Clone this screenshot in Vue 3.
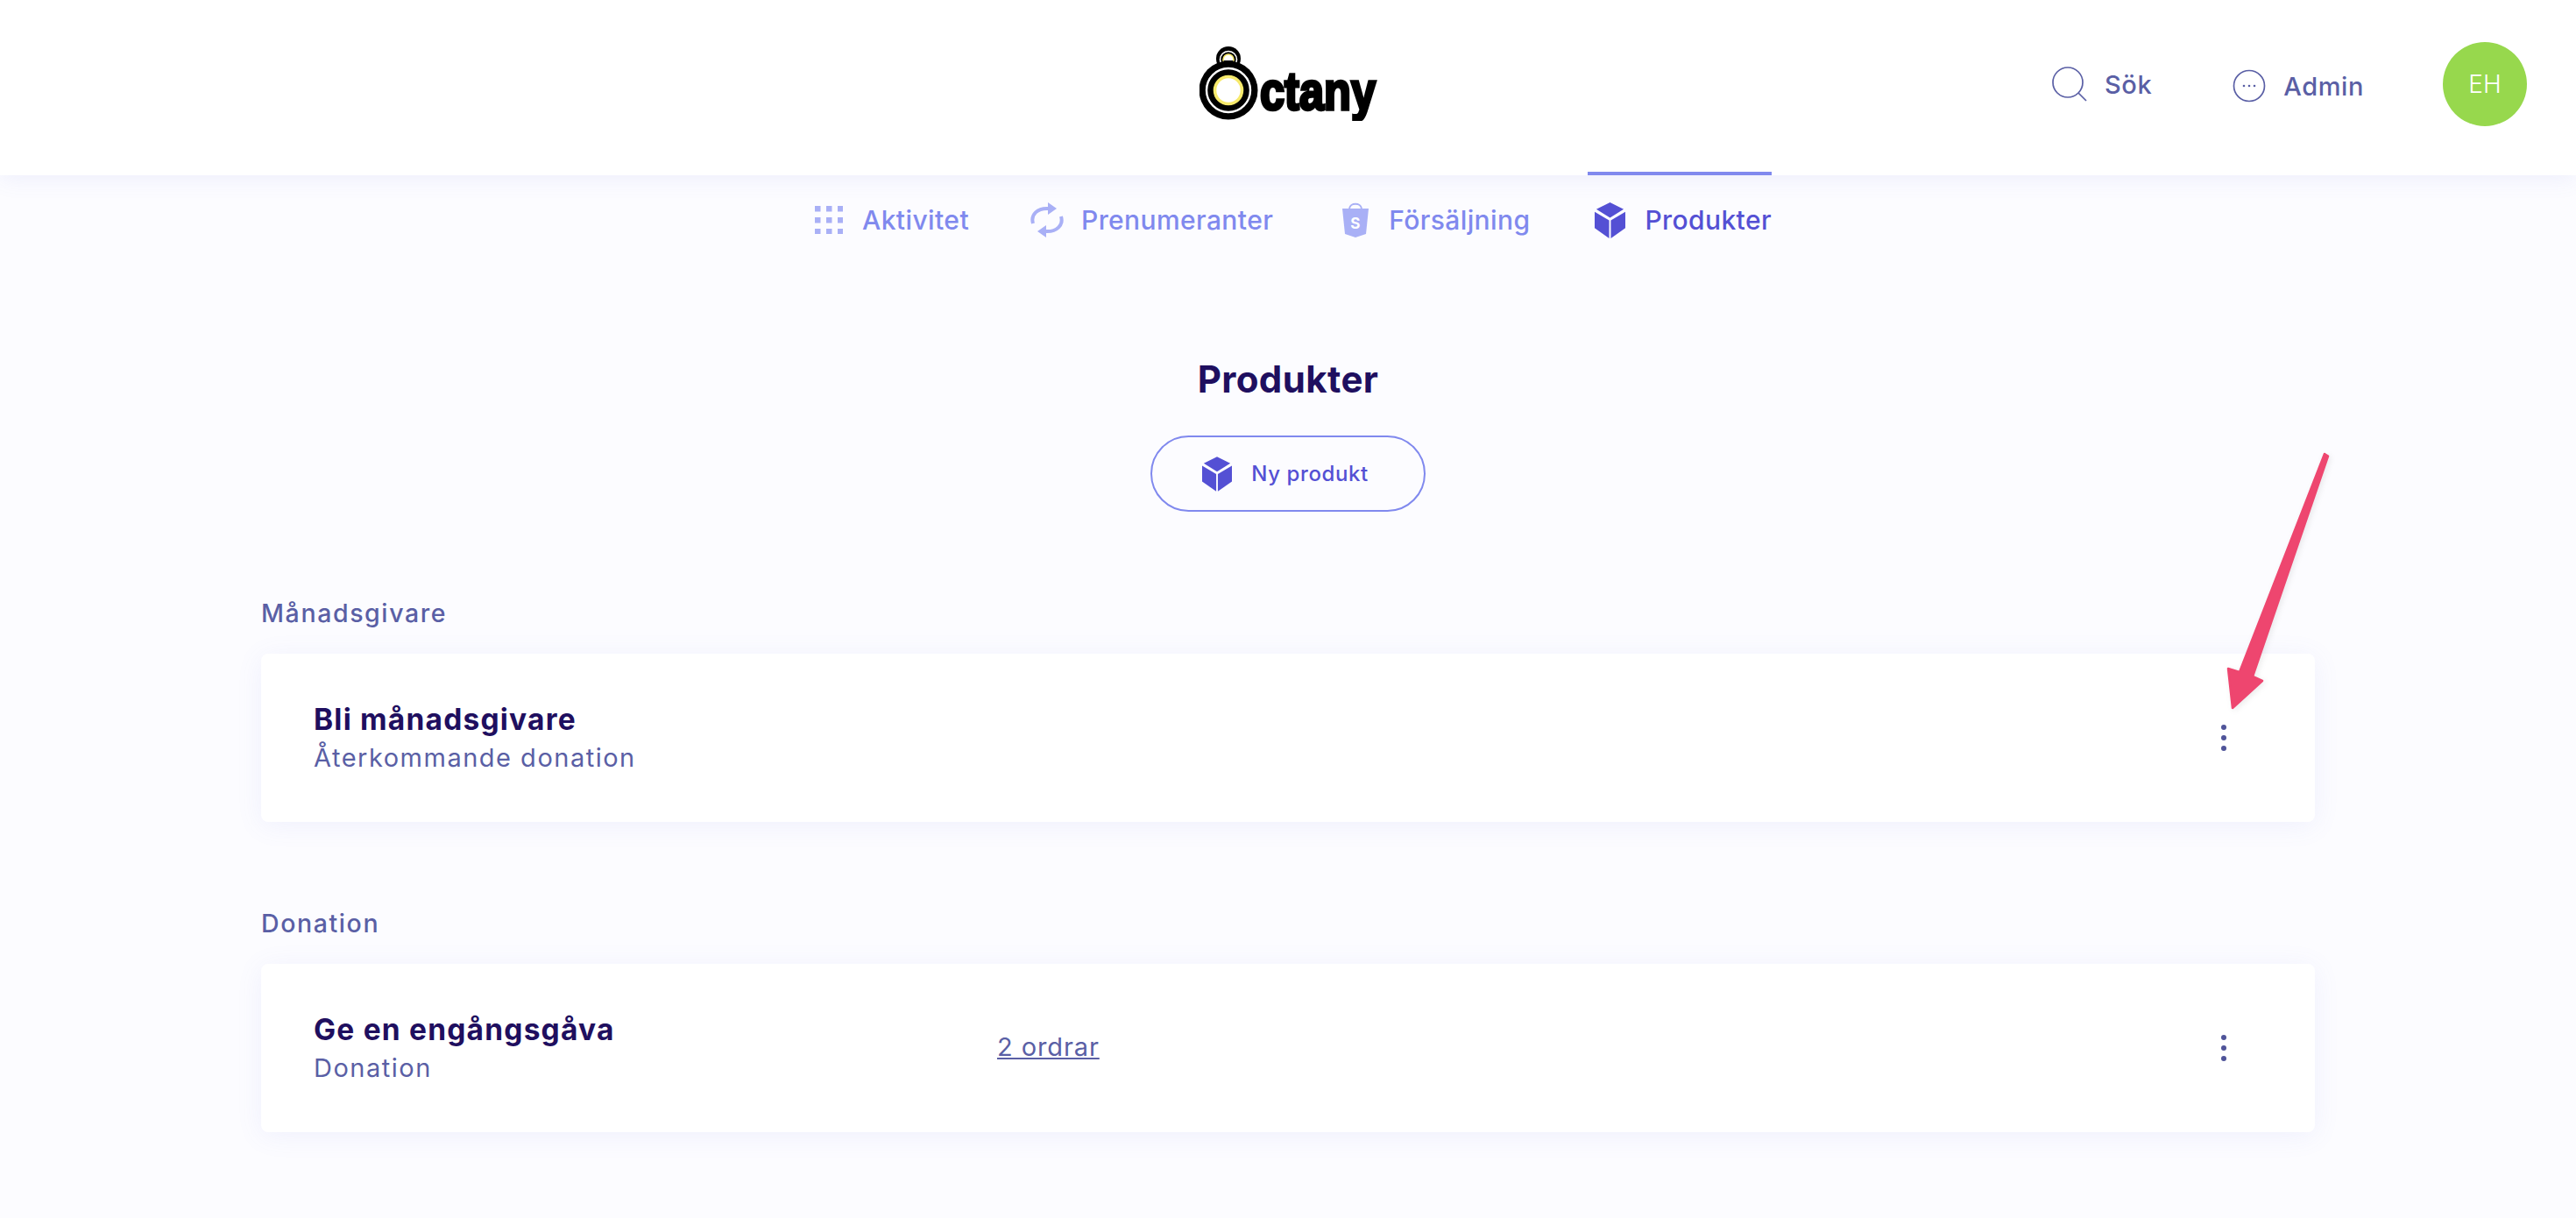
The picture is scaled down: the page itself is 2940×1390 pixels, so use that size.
<template>
  <div class="page">
    <header class="topbar">
      <div class="topbar-side"></div>
      <div class="logo" aria-label="Octany">
        <svg width="222" height="86" viewBox="0 0 222 86">
          <circle cx="33" cy="15" r="14" fill="#000" />
          <circle cx="33" cy="16" r="9.5" fill="none" stroke="#fff" stroke-width="1.6" />
          <circle cx="33" cy="16" r="6" fill="#fff" stroke="#f7ea6c" stroke-width="1.6" />
          <path d="M27.5 17h11a5.5 5 0 0 1-11 0z" fill="#000" />
          <circle cx="33" cy="51" r="33.5" fill="#000" />
          <circle cx="33" cy="51" r="25" fill="none" stroke="#fff" stroke-width="2.4" />
          <circle cx="33" cy="51" r="15.5" fill="#fff" stroke="#f7ea6c" stroke-width="3.6" />
          <text class="logo-text" x="69" y="73" textLength="132" lengthAdjust="spacingAndGlyphs">ctany</text>
        </svg>
      </div>
      <div class="topbar-side topbar-actions">
        <a class="action action-search">
          <svg width="40" height="40" viewBox="0 0 40 40" fill="none" stroke="#5a5fa5" stroke-width="1.7">
            <ellipse cx="18" cy="18" rx="17" ry="17" />
            <path d="M30 30l9 9" />
          </svg>
          <span>Sök</span>
        </a>
        <a class="action action-admin">
          <svg width="38" height="38" viewBox="0 0 38 38" fill="none" stroke="#5a5fa5" stroke-width="1.7">
            <circle cx="19" cy="19" r="17.5" />
            <circle cx="13" cy="19" r="1.3" fill="#5a5fa5" stroke="none" />
            <circle cx="19" cy="19" r="1.3" fill="#5a5fa5" stroke="none" />
            <circle cx="25" cy="19" r="1.3" fill="#5a5fa5" stroke="none" />
          </svg>
          <span>Admin</span>
        </a>
        <div class="avatar">EH</div>
      </div>
    </header>

    <nav class="tabs">
      <a v-for="tab in tabs" :key="tab.label" class="tab" :class="{ active: tab.active }">
        <svg v-if="tab.icon === 'grid'" class="tab-icon" width="32" height="32" viewBox="0 0 32 32" fill="#a9b0f6">
          <template v-for="row in [0, 1, 2]" :key="row">
            <rect v-for="col in [0, 1, 2]" :key="col" :x="col * 13" :y="row * 13" width="6.5" height="6.5" />
          </template>
        </svg>
        <svg v-else-if="tab.icon === 'sync'" class="tab-icon" width="38" height="42" viewBox="0 0 38 42" fill="none">
          <path d="M3 25C0 15 8 7 21 8" stroke="#a9b0f6" stroke-width="4" />
          <path d="M20 1l10 7-10 7z" fill="#a9b0f6" />
          <path d="M35 17C38 27 30 35 17 34" stroke="#a9b0f6" stroke-width="4" />
          <path d="M18 41L8 34l10-7z" fill="#a9b0f6" />
        </svg>
        <svg v-else-if="tab.icon === 'bag'" class="tab-icon" width="32" height="40" viewBox="0 0 32 40">
          <path d="M9 7C10 0 22 0 23 7" fill="none" stroke="#a9b0f6" stroke-width="2" />
          <path d="M1 7l30 0-3 29-12 4-12-4z" fill="#a9b0f6" />
          <text x="16" y="30" class="bag-s">S</text>
        </svg>
        <svg v-else class="tab-icon" width="35" height="41" viewBox="0 0 36 42" fill="#5450d4">
          <path d="M18 0l16 8-16 10L2 8z" />
          <path d="M0 11l17 10v21L0 30z" />
          <path d="M36 11L19 21v21l17-12z" />
        </svg>
        <span>{{ tab.label }}</span>
      </a>
    </nav>

    <main class="content">
      <h1 class="title">Produkter</h1>
      <a class="new-button">
        <svg width="34" height="40" viewBox="0 0 36 42" fill="#5450d4">
          <path d="M18 0l16 8-16 10L2 8z" />
          <path d="M0 11l17 10v21L0 30z" />
          <path d="M36 11L19 21v21l17-12z" />
        </svg>
        <span>Ny produkt</span>
      </a>

      <section v-for="group in groups" :key="group.label" class="group">
        <h2 class="group-label">{{ group.label }}</h2>
        <div class="card">
          <div class="card-main">
            <div class="card-title">{{ group.title }}</div>
            <div class="card-sub">{{ group.sub }}</div>
          </div>
          <a v-if="group.orders" class="orders">{{ group.orders }}</a>
          <div class="dots"><i></i><i></i><i></i></div>
        </div>
      </section>
    </main>

    <svg class="arrow" width="130" height="310" viewBox="0 0 130 310">
      <path
        d="M118 8L122 10.5L36 262L47 267L13 298L8 253L21 257z"
        fill="#ee466f"
        stroke="#ee466f"
        stroke-width="2.5"
        stroke-linejoin="round"
      />
    </svg>
  </div>
</template>

<script setup>
const tabs = [
  { label: 'Aktivitet', icon: 'grid' },
  { label: 'Prenumeranter', icon: 'sync' },
  { label: 'Försäljning', icon: 'bag' },
  { label: 'Produkter', icon: 'box', active: true },
]

const groups = [
  { label: 'Månadsgivare', title: 'Bli månadsgivare', sub: 'Återkommande donation' },
  { label: 'Donation', title: 'Ge en engångsgåva', sub: 'Donation', orders: '2 ordrar' },
]
</script>

<style>
html,
body {
  background: #fcfcff;
}
</style>

<style scoped>
.page {
  position: relative;
  min-height: 1390px;
  background: #fcfcff;
  font-family: Inter, 'Noto Sans', sans-serif;
  color: #5a5fa5;
  overflow: hidden;
}

.topbar {
  display: grid;
  grid-template-columns: 1fr auto 1fr;
  align-items: center;
  box-sizing: border-box;
  height: 200px;
  padding-bottom: 8px;
  background: #fff;
  box-shadow: 0 4px 24px rgba(110, 120, 230, 0.1);
  position: relative;
}

.logo {
  display: flex;
  transform: translate(2px, -1px);
}

.logo svg {
  margin-right: -16px;
}

.logo-text {
  font-family: 'Liberation Sans', sans-serif;
  font-weight: 700;
  font-size: 62px;
  fill: #000;
  stroke: #000;
  stroke-width: 3.5px;
}

.topbar-actions {
  display: flex;
  align-items: center;
  justify-content: flex-end;
  padding-right: 56px;
}

.action {
  display: flex;
  align-items: center;
  gap: 20px;
  font-size: 29px;
  font-weight: 500;
  letter-spacing: 0.6px;
}

.action-admin {
  margin-left: 92px;
  margin-right: 90px;
}

.action-admin svg,
.action-admin span {
  position: relative;
  top: 2px;
}

.avatar {
  width: 96px;
  height: 96px;
  border-radius: 50%;
  background: #97d84d;
  color: #fff;
  font-size: 28px;
  font-weight: 300;
  display: flex;
  align-items: center;
  justify-content: center;
}

.tabs {
  display: flex;
  justify-content: center;
  gap: 72px;
  height: 102px;
  padding-left: 12px;
}

.tab {
  position: relative;
  display: flex;
  align-items: center;
  gap: 22px;
  font-size: 30px;
  font-weight: 500;
  letter-spacing: 0.4px;
  color: #8089ee;
}

.tab:nth-child(2) {
  gap: 20px;
  margin: 0 6px 0 -2px;
}

.tab:nth-child(3) {
  margin-right: 2px;
}

.tab.active {
  color: #5450d4;
}

.tab.active::before {
  content: '';
  position: absolute;
  top: -4px;
  left: -8px;
  right: 0;
  height: 4px;
  background: #8089ee;
}

.bag-s {
  font-family: Inter, sans-serif;
  font-weight: 700;
  font-size: 17px;
  fill: #fff;
  text-anchor: middle;
}

.content {
  display: flex;
  flex-direction: column;
  align-items: center;
  padding: 101px 298px 0;
}

.title {
  margin: 0;
  font-size: 42px;
  line-height: 60px;
  font-weight: 700;
  color: #1f0f5f;
  letter-spacing: 0.4px;
}

.new-button {
  display: flex;
  align-items: center;
  justify-content: center;
  gap: 22px;
  box-sizing: border-box;
  width: 314px;
  height: 87px;
  margin: 34px 0 0;
  padding-right: 6px;
  border: 2px solid #8089ee;
  border-radius: 44px;
  font-size: 24px;
  font-weight: 500;
  letter-spacing: 0.6px;
  color: #5450d4;
}

.group {
  width: 100%;
  margin-top: 96px;
}

.group-label {
  margin: 0 0 26px;
  font-size: 28.5px;
  line-height: 40px;
  font-weight: 500;
  color: #5a5fa5;
  letter-spacing: 1.6px;
}

.card {
  display: flex;
  align-items: center;
  box-sizing: border-box;
  height: 192px;
  padding: 0 101px 0 60px;
  background: #fff;
  border-radius: 8px;
  box-shadow: 0 4px 30px rgba(110, 120, 230, 0.09);
}

.card-main {
  flex: 0 0 780px;
  margin-top: 2px;
}

.card-title {
  font-size: 33.5px;
  line-height: 44px;
  font-weight: 700;
  letter-spacing: 1.2px;
  color: #1f0f5f;
}

.card-sub {
  font-size: 29px;
  line-height: 44px;
  font-weight: 400;
  letter-spacing: 1.5px;
}

.orders {
  font-size: 29px;
  text-decoration: underline;
  letter-spacing: 0.9px;
  margin-top: -4px;
}

.dots {
  display: flex;
  flex-direction: column;
  gap: 6px;
  margin-left: auto;
}

.dots i {
  display: block;
  width: 6px;
  height: 6px;
  border-radius: 50%;
  background: #4f5499;
}

.arrow {
  position: absolute;
  left: 2535px;
  top: 510px;
  filter: drop-shadow(2px 2px 3px rgba(0, 0, 0, 0.08));
}
</style>
